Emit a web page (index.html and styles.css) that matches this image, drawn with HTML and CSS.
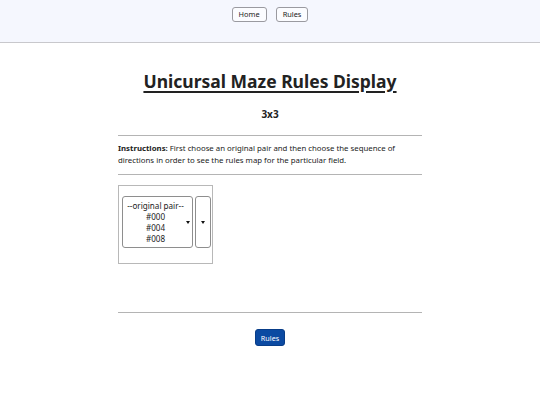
FILE: index.html
```html
<!DOCTYPE html>
<html>
<head>
<meta charset="utf-8">
<link rel="stylesheet" href="styles.css">
</head>
<body>
<header class="topbar">
  <button class="nav-btn">Home</button>
  <button class="nav-btn">Rules</button>
</header>
<main class="content">
  <h1 class="title">Unicursal Maze Rules Display</h1>
  <h2 class="subtitle">3x3</h2>
  <hr class="rule">
  <p class="instructions"><b>Instructions:</b> First choose an original pair and then choose the sequence of directions in order to see the rules map for the particular field.</p>
  <hr class="rule">
  <div class="panel">
    <div class="select big">
      <div class="options">
        <span>--original pair--</span>
        <span>#000</span>
        <span>#004</span>
        <span>#008</span>
      </div>
      <span class="caret"></span>
    </div>
    <div class="select small">
      <span class="caret"></span>
    </div>
  </div>
  <hr class="rule bottom">
  <div class="actions">
    <button class="primary-btn">Rules</button>
  </div>
</main>
</body>
</html>
```
FILE: styles.css
```css
* { box-sizing: border-box; }
body {
  margin: 0;
  font-family: "Noto Sans", "Open Sans", sans-serif;
  color: #222;
  background: #fff;
}
.topbar {
  height: 43px;
  background: #f5f7fe;
  border-bottom: 1px solid #c8c8cc;
  display: flex;
  justify-content: center;
  align-items: flex-start;
  gap: 9px;
  padding-top: 7px;
}
.nav-btn {
  font-family: inherit;
  font-size: 7.4px;
  height: 15px;
  padding: 0 6px;
  background: #fbfcff;
  border: 1px solid #9a9aa0;
  border-radius: 3px;
  color: #222;
  line-height: 13px;
}
.content {
  width: 304px;
  margin: 0 auto;
}
.title {
  margin: 25px 0 0;
  text-align: center;
  font-size: 17.5px;
  font-weight: 700;
  text-decoration: underline;
  text-decoration-thickness: 2px;
  text-underline-offset: 3px;
  line-height: 27px;
  color: #222;
}
.subtitle {
  margin: 12px 0 0;
  text-align: center;
  font-size: 10px;
  font-weight: 700;
  line-height: 15px;
}
.rule {
  border: 0;
  border-top: 1px solid #b4b4b4;
  margin: 0;
}
.subtitle + .rule { margin-top: 13px; }
.instructions {
  margin: 6px 0 8px;
  font-size: 7.8px;
  line-height: 12px;
}
.panel {
  margin-top: 10px;
  width: 95px;
  height: 79px;
  border: 1px solid #b8b8b8;
  display: flex;
  align-items: flex-start;
  gap: 2px;
  padding: 10px 0 0 3px;
}
.select {
  height: 52px;
  border: 1px solid #8e8e8e;
  border-radius: 3px;
  background: #fff;
  position: relative;
  display: flex;
  align-items: center;
}
.select.big { width: 71px; }
.select.small { width: 16px; justify-content: center; }
.options {
  width: 63px;
  padding-left: 2px;
  display: flex;
  flex-direction: column;
  align-items: center;
  font-size: 8.1px;
  line-height: 11px;
  color: #222;
}
.caret {
  width: 0; height: 0;
  border-left: 2.5px solid transparent;
  border-right: 2.5px solid transparent;
  border-top: 3px solid #111;
}
.rule.bottom { margin-top: 48px; }
.actions {
  display: flex;
  justify-content: center;
  margin-top: 16px;
}
.primary-btn {
  font-family: inherit;
  font-size: 7.2px;
  height: 17px;
  padding: 0 5px;
  background: #0b4aa2;
  color: #fff;
  border: 1px solid #083d88;
  border-radius: 3px;
}
```
